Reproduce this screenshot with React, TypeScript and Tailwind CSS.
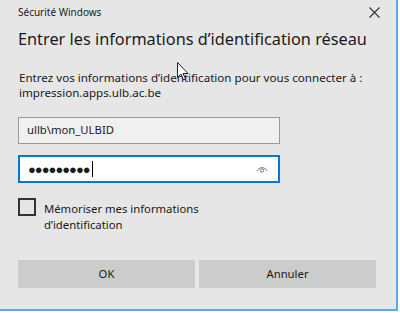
import React from "react";

export default function App() {
  return (
    <div className="w-[400px] h-[313px] bg-white relative overflow-hidden" style={{ fontFamily: '"Noto Sans", "Open Sans", sans-serif' }}>
      <div className="w-[398px] h-[311px] bg-[#e6e6e6] border-r-2 border-b-2 border-[#5fa8e8] flex flex-col text-[#1a1a1a]">
        <div className="flex items-center justify-between pl-[18px] pr-[16px] pt-[6px] h-[18px]">
          <span className="text-[10px] leading-[12px] whitespace-nowrap">Sécurité Windows</span>
          <svg width="11" height="11" viewBox="0 0 11 11" className="mt-[1px]">
            <path d="M0.5 0.5 L10.5 10.5 M10.5 0.5 L0.5 10.5" stroke="#333" strokeWidth="1.1" />
          </svg>
        </div>
        <div className="pl-[18px] mt-[11px] text-[16.3px] leading-[20px] whitespace-nowrap">
          Entrer les informations d’identification réseau
        </div>
        <div className="pl-[19px] mt-[21px] text-[11.6px] leading-[15px] whitespace-nowrap">
          <div>Entrez vos informations d’identification pour vous connecter à :</div>
          <div>impression.apps.ulb.ac.be</div>
        </div>
        <div className="ml-[18px] mt-[17px] w-[262px] h-[27px] border border-[#9a9a9a] bg-[#f0f0f0] flex items-center pl-[8px] text-[11.3px]">
          ullb\mon_ULBID
        </div>
        <div className="ml-[18px] mt-[11px] w-[262px] h-[28px] border-2 border-[#0078d7] bg-white flex items-center pl-[8px] pr-[10px]">
          <span className="text-[13px] tracking-[-1px] leading-none">●●●●●●●●●</span>
          <span className="w-px h-[16px] bg-black ml-[2px]" />
          <span className="flex-1" />
          <svg width="12" height="8" viewBox="0 0 12 8">
            <path d="M1 6 C3 1.5 9 1.5 11 6" fill="none" stroke="#777" strokeWidth="1" />
            <circle cx="6" cy="5.5" r="1.7" fill="none" stroke="#777" strokeWidth="1" />
          </svg>
        </div>
        <div className="flex items-start ml-[18px] mt-[15px]">
          <div className="w-[18px] h-[18px] border-2 border-[#333] shrink-0" />
          <div className="ml-[8px] mt-[3px] text-[11.3px] leading-[16px] whitespace-nowrap">
            <div>Mémoriser mes informations</div>
            <div>d’identification</div>
          </div>
        </div>
        <div className="flex gap-[4px] ml-[18px] mt-[27px]">
          <div className="w-[177px] h-[28px] bg-[#cccccc] flex items-center justify-center text-[11.3px]">OK</div>
          <div className="w-[177px] h-[28px] bg-[#cccccc] flex items-center justify-center text-[11.3px]">Annuler</div>
        </div>
      </div>
      <svg className="absolute left-[177px] top-[62px]" width="12" height="19" viewBox="0 0 12 19">
        <path d="M0.5 0.5 L0.5 15.5 L4 12 L6.5 18 L8.5 17 L6 11.5 L11 11.5 Z" fill="white" stroke="#222" strokeWidth="1" />
      </svg>
    </div>
  );
}
